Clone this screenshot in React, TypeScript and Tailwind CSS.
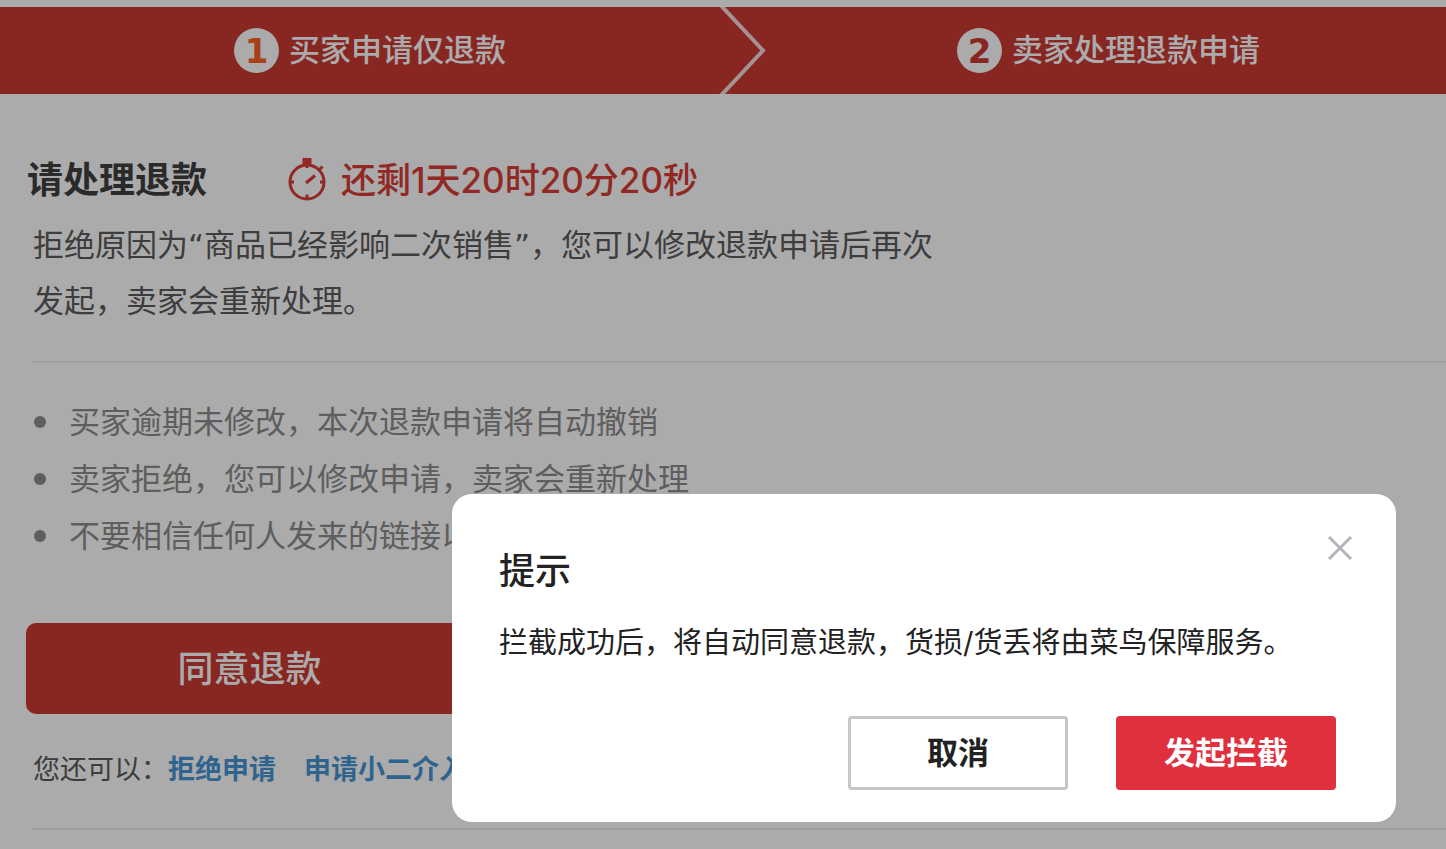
import { useState } from "react";

const steps = ["买家申请仅退款", "卖家处理退款申请"];

const tips = [
    "买家逾期未修改，本次退款申请将自动撤销",
    "卖家拒绝，您可以修改申请，卖家会重新处理",
    "不要相信任何人发来的链接以及退款信息",
];

const StopwatchIcon = () => (
    <svg width="40" height="44" viewBox="0 0 40 44" fill="none" stroke="currentColor" strokeWidth="3" aria-hidden="true">
        <circle cx="20" cy="24" r="17" />
        <path d="M15.5 1.500h9M15.5 4.500h9M20 2v8M20 36.500v4M3 24h4M33 24h4" />
        <path d="M31.500 12.500l4-4" />
        <path d="M19 25l9-7.500" />
    </svg>
);

const StepBar = () => (
    <header className="relative">
        <ol className="flex h-[87px] bg-[#cb3933]">
            {steps.map((step, index) => (
                <li key={step} className="flex w-1/2 items-center gap-2.5 pl-[234px] text-[31px] font-medium text-white">
                    <span
                        className={`flex size-[45px] shrink-0 items-center justify-center rounded-full bg-white font-['DejaVu_Sans'] text-[34px] leading-none font-bold ${
                            index === 0 ? "text-[#fc6024]" : "text-[#cb3933]"
                        }`}
                    >
                        {index + 1}
                    </span>
                    {step}
                </li>
            ))}
        </ol>
        <svg
            className="absolute top-0 left-1/2 -ml-1"
            width="50"
            height="87"
            viewBox="0 0 50 87"
            fill="none"
            stroke="#f3dcdb"
            strokeWidth="4"
            aria-hidden="true"
        >
            <path d="M1.500-2L44 43.500L1.500 89" />
        </svg>
    </header>
);

const RefundPanel = () => (
    <main>
        <section className="px-[27px] pt-[59px]">
            <div className="flex items-center gap-20 text-[36px] leading-[54px]">
                <h1 className="font-bold text-[#3f3f3f]">请处理退款</h1>
                <p className="flex items-center gap-3.5 text-[35px] font-medium text-[#d83c36]">
                    <StopwatchIcon />
                    还剩1天20时20分20秒
                </p>
            </div>
            <p className="max-w-[930px] pt-2.5 pl-1.5 font-['DejaVu_Sans','Noto_Sans_CJK_SC',sans-serif] text-[31px] leading-[56px] text-[#5c5c5c]">
                拒绝原因为“商品已经影响二次销售”，您可以修改退款申请后再次发起，卖家会重新处理。
            </p>
        </section>

        <hr className="mt-8 ml-8 border-t-2 border-[#ededed]" />

        <section className="px-[26px] pt-[30px]">
            <ul className="pl-2 text-[31px] leading-[57px] text-[#8c8c8c]">
                {tips.map((tip) => (
                    <li key={tip} className="flex items-center gap-[23px]">
                        <span className="size-3 shrink-0 rounded-full bg-[#8c8c8c]" />
                        {tip}
                    </li>
                ))}
            </ul>
            <button
                type="button"
                className="mt-[59px] block h-[91px] w-[447px] rounded-[10px] bg-[#cb3933] text-[36px] font-medium text-white"
            >
                同意退款
            </button>
            <p className="flex pt-9 pl-[7px] text-[27px] leading-[40px] text-[#5c5c5c]">
                您还可以：
                <a href="#reject" className="mr-7 font-bold text-[#4695d5]">拒绝申请</a>
                <a href="#service" className="font-bold text-[#4695d5]">申请小二介入</a>
            </p>
        </section>

        <hr className="mt-[38px] ml-8 border-t-2 border-[#ededed]" />
    </main>
);

const ConfirmDialog = ({ onClose }: { onClose: () => void }) => (
    <div className="absolute inset-0 flex items-end justify-end bg-black/33 pr-[50px] pb-[27px]">
        <div
            role="dialog"
            aria-labelledby="dialog-title"
            className="w-[944px] rounded-[20px] bg-white pt-[38px] pr-[60px] pb-8 pl-[47px]"
        >
            <div className="flex items-start justify-between">
                <h2 id="dialog-title" className="pt-3 text-[36px] leading-[54px] font-medium text-[#222222]">
                    提示
                </h2>
                <button type="button" aria-label="关闭" onClick={onClose} className="-mr-5 p-1 text-[#b4b4ba]">
                    <svg width="24" height="24" viewBox="0 0 24 24" fill="none" stroke="currentColor" strokeWidth="3">
                        <path d="M1 1l22 22M23 1L1 23" />
                    </svg>
                </button>
            </div>
            <p className="pt-[21px] text-[29px] leading-[48px] whitespace-nowrap text-[#222222]">
                拦截成功后，将自动同意退款，货损/货丢将由菜鸟保障服务。
            </p>
            <div className="flex justify-end gap-12 pt-[49px] text-[31px]">
                <button
                    type="button"
                    onClick={onClose}
                    className="h-[74px] w-[220px] rounded border-3 border-[#c6c6c6] font-bold text-[#222222]"
                >
                    取消
                </button>
                <button type="button" className="h-[74px] w-[220px] rounded bg-[#e0303e] font-bold text-white">
                    发起拦截
                </button>
            </div>
        </div>
    </div>
);

const App = () => {
    const [open, setOpen] = useState(true);

    return (
        <div
            lang="zh-CN"
            className="relative min-h-screen overflow-hidden bg-white pt-[7px] font-[Inter,'Noto_Sans_CJK_SC',sans-serif]"
        >
            <StepBar />
            <RefundPanel />
            {open && <ConfirmDialog onClose={() => setOpen(false)} />}
        </div>
    );
};

export default App;
